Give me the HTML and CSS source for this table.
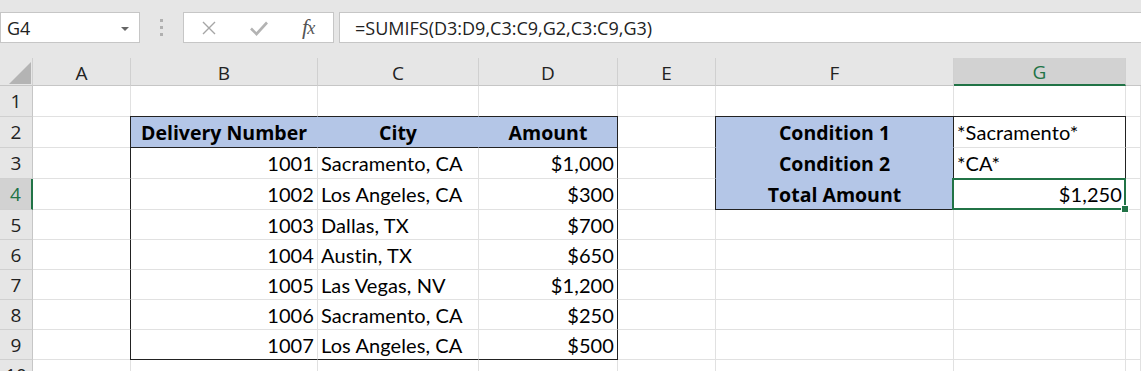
FILE: index.html
```html
<!DOCTYPE html>
<html>
<head>
<meta charset="utf-8">
<link rel="stylesheet" href="styles.css">
</head>
<body>
<div class="toolbar">
  <div class="namebox">
    <span class="nb-text">G4</span>
    <span class="nb-arrow"></span>
  </div>
  <div class="grip"><i></i><i></i><i></i></div>
  <div class="fbuttons">
    <svg class="ic-x" width="16" height="16" viewBox="0 0 16 16"><path d="M2 2 L14 14 M14 2 L2 14" stroke="#a6a6a6" stroke-width="1.4" fill="none"/></svg>
    <svg class="ic-check" width="20" height="16" viewBox="0 0 20 16"><path d="M2 8.5 L7.5 14 L18 2.5" stroke="#b3b3b3" stroke-width="2.6" fill="none"/></svg>
    <span class="ic-fx">f<span class="fx-x">x</span></span>
  </div>
  <div class="formula">=SUMIFS(D3:D9,C3:C9,G2,C3:C9,G3)</div>
</div>

<div class="sheet">
  <div class="corner"><span class="tri"></span></div>
  <div class="ch">A</div>
  <div class="ch">B</div>
  <div class="ch">C</div>
  <div class="ch">D</div>
  <div class="ch">E</div>
  <div class="ch">F</div>
  <div class="ch ch-sel">G</div>
  <div class="ch ch-last"></div>

  <!-- row 1 -->
  <div class="rh">1</div>
  <div class="c"></div><div class="c"></div><div class="c"></div><div class="c"></div><div class="c"></div><div class="c"></div><div class="c"></div><div class="c"></div>

  <!-- row 2 -->
  <div class="rh">2</div>
  <div class="c"></div>
  <div class="c hd t-top t-left">Delivery Number</div>
  <div class="c hd t-top">City</div>
  <div class="c hd t-top t-right">Amount</div>
  <div class="c"></div>
  <div class="c lbl t-top t-left t-right">Condition 1</div>
  <div class="c t-top t-right txt">*Sacramento*</div>
  <div class="c"></div>

  <!-- row 3 -->
  <div class="rh">3</div>
  <div class="c"></div>
  <div class="c num t-left">1001</div>
  <div class="c txt">Sacramento, CA</div>
  <div class="c num t-right">$1,000</div>
  <div class="c"></div>
  <div class="c lbl t-left t-right">Condition 2</div>
  <div class="c t-right txt">*CA*</div>
  <div class="c"></div>

  <!-- row 4 -->
  <div class="rh rh-sel">4</div>
  <div class="c"></div>
  <div class="c num t-left">1002</div>
  <div class="c txt">Los Angeles, CA</div>
  <div class="c num t-right">$300</div>
  <div class="c"></div>
  <div class="c lbl t-left t-right t-bottom">Total Amount</div>
  <div class="c num t-right t-bottom active">$1,250<span class="handle"></span></div>
  <div class="c"></div>

  <!-- row 5 -->
  <div class="rh">5</div>
  <div class="c"></div>
  <div class="c num t-left">1003</div>
  <div class="c txt">Dallas, TX</div>
  <div class="c num t-right">$700</div>
  <div class="c"></div><div class="c"></div><div class="c"></div><div class="c"></div>

  <!-- row 6 -->
  <div class="rh">6</div>
  <div class="c"></div>
  <div class="c num t-left">1004</div>
  <div class="c txt">Austin, TX</div>
  <div class="c num t-right">$650</div>
  <div class="c"></div><div class="c"></div><div class="c"></div><div class="c"></div>

  <!-- row 7 -->
  <div class="rh">7</div>
  <div class="c"></div>
  <div class="c num t-left">1005</div>
  <div class="c txt">Las Vegas, NV</div>
  <div class="c num t-right">$1,200</div>
  <div class="c"></div><div class="c"></div><div class="c"></div><div class="c"></div>

  <!-- row 8 -->
  <div class="rh">8</div>
  <div class="c"></div>
  <div class="c num t-left">1006</div>
  <div class="c txt">Sacramento, CA</div>
  <div class="c num t-right">$250</div>
  <div class="c"></div><div class="c"></div><div class="c"></div><div class="c"></div>

  <!-- row 9 -->
  <div class="rh">9</div>
  <div class="c"></div>
  <div class="c num t-left t-bottom">1007</div>
  <div class="c txt t-bottom">Los Angeles, CA</div>
  <div class="c num t-right t-bottom">$500</div>
  <div class="c"></div><div class="c"></div><div class="c"></div><div class="c"></div>

  <!-- row 10 -->
  <div class="rh">10</div>
  <div class="c"></div><div class="c"></div><div class="c"></div><div class="c"></div><div class="c"></div><div class="c"></div><div class="c"></div><div class="c"></div>
</div>
</body>
</html>
```

FILE: styles.css
```css
html, body {
  margin: 0;
  padding: 0;
  background: #ffffff;
  overflow: hidden;
  width: 1141px;
  height: 371px;
}

.toolbar {
  height: 58px;
  background: #e6e6e6;
  display: flex;
  align-items: flex-start;
  padding-top: 12px;
  box-sizing: border-box;
}

.namebox {
  width: 140px;
  height: 31px;
  background: #fff;
  border: 1px solid #c6c6c6;
  box-sizing: border-box;
  display: flex;
  align-items: center;
  justify-content: space-between;
  padding: 0 10px 0 6px;
  font-family: "Open Sans", sans-serif;
  font-size: 18px;
  color: #222;
}

.nb-arrow {
  width: 0;
  height: 0;
  border-left: 4px solid transparent;
  border-right: 4px solid transparent;
  border-top: 4px solid #666;
  margin-top: 2px;
}

.grip {
  width: 43px;
  height: 31px;
  display: flex;
  flex-direction: column;
  align-items: center;
  justify-content: center;
  gap: 4px;
}
.grip i {
  display: block;
  width: 3px;
  height: 3px;
  background: #b0b0b0;
}

.fbuttons {
  width: 151px;
  height: 31px;
  background: #fff;
  border: 1px solid #c6c6c6;
  box-sizing: border-box;
  display: flex;
  align-items: center;
  padding-left: 17px;
}
.ic-x { margin-right: 32px; }
.ic-check { margin-right: 33px; }
.ic-fx {
  font-family: "Liberation Serif", serif;
  font-style: italic;
  font-size: 22px;
  color: #555;
  letter-spacing: -1px;
  line-height: 1;
  margin-top: -2px;
}
.fx-x { font-size: 18px; }

.formula {
  margin-left: 5px;
  flex: 1;
  height: 31px;
  background: #fff;
  border: 1px solid #c6c6c6;
  border-right: none;
  box-sizing: border-box;
  display: flex;
  align-items: center;
  padding-left: 15px;
  font-family: "Open Sans", sans-serif;
  font-size: 18px;
  color: #222;
  white-space: nowrap;
}

.sheet {
  display: grid;
  grid-template-columns: 33px 98px 187px 161px 139px 98px 238px 172px 15px;
  grid-template-rows: 28px 31px 31px 31px 31px 30px 30px 30px 30px 30px 30px;
}

.corner {
  background: #e6e6e6;
  border-right: 1px solid #d0d0d0;
  border-bottom: 1px solid #c6c6c6;
  box-sizing: border-box;
  position: relative;
}
.tri {
  position: absolute;
  left: 9px;
  top: 4px;
  width: 0;
  height: 0;
  border-left: 22px solid transparent;
  border-bottom: 22px solid #b4b4b4;
}

.ch {
  background: #e6e6e6;
  border-right: 1px solid #d0d0d0;
  border-bottom: 1px solid #c6c6c6;
  box-sizing: border-box;
  display: flex;
  align-items: center;
  justify-content: center;
  font-family: "Open Sans", sans-serif;
  font-size: 19px;
  color: #222;
  padding-top: 2px;
}
.ch-last { border-right: none; }
.ch-sel {
  background: #d2d2d2;
  color: #217346;
  border-bottom: 2px solid #217346;
}

.rh {
  background: #e6e6e6;
  border-right: 1px solid #c6c6c6;
  border-bottom: 1px solid #d0d0d0;
  box-sizing: border-box;
  display: flex;
  align-items: center;
  justify-content: center;
  font-family: "Open Sans", sans-serif;
  font-size: 19px;
  color: #222;
}
.rh-sel {
  background: #d2d2d2;
  color: #217346;
  border-right: 2px solid #217346;
}

.c {
  border-right: 1px solid #e1e1e1;
  border-bottom: 1px solid #e1e1e1;
  box-sizing: border-box;
  display: flex;
  align-items: center;
  padding: 0 3px;
  font-family: Lato, "Liberation Sans", sans-serif;
  font-size: 20px;
  letter-spacing: 0.1px;
  color: #000;
  white-space: nowrap;
  overflow: visible;
  position: relative;
}

.txt { justify-content: flex-start; }
.num { justify-content: flex-end; }

.hd, .lbl {
  background: #b4c6e7;
  border-right-color: #b4c6e7;
  border-bottom-color: #b4c6e7;
  font-family: "Open Sans", sans-serif;
  font-size: 19.5px;
  letter-spacing: 0;
  font-weight: bold;
  justify-content: center;
}
.hd { border-bottom: 1px solid #222; }

.t-top { border-top: 1px solid #222; margin-top: -1px; }
.t-left { border-left: 1px solid #222; margin-left: -1px; }
.t-right { border-right: 1px solid #222; }
.t-bottom { border-bottom: 1px solid #222; }

.active::after {
  content: "";
  position: absolute;
  left: -2px;
  top: -1px;
  right: -1px;
  bottom: -1px;
  border: 2px solid #217346;
  pointer-events: none;
}
.handle {
  position: absolute;
  right: -4px;
  bottom: -4px;
  width: 6px;
  height: 6px;
  background: #217346;
  border: 1px solid #fff;
  z-index: 2;
}
```
